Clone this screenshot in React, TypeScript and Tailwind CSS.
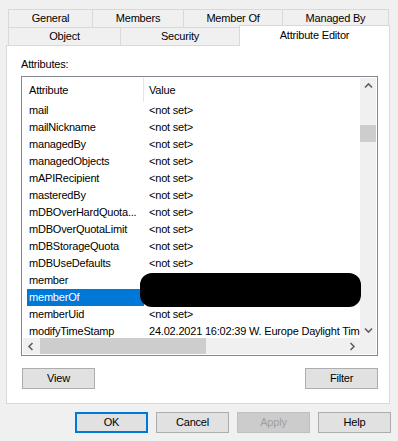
import React from "react";

const rows: [string, string][] = [
  ["mail", "<not set>"],
  ["mailNickname", "<not set>"],
  ["managedBy", "<not set>"],
  ["managedObjects", "<not set>"],
  ["mAPIRecipient", "<not set>"],
  ["masteredBy", "<not set>"],
  ["mDBOverHardQuota...", "<not set>"],
  ["mDBOverQuotaLimit", "<not set>"],
  ["mDBStorageQuota", "<not set>"],
  ["mDBUseDefaults", "<not set>"],
  ["member", ""],
  ["memberOf", ""],
  ["memberUid", "<not set>"],
  ["modifyTimeStamp", "24.02.2021 16:02:39 W. Europe Daylight Time"],
];

function Chevron({ dir }: { dir: "up" | "down" | "left" | "right" }) {
  const d =
    dir === "up"
      ? "M1 5.5 L4.5 2 L8 5.5"
      : dir === "down"
      ? "M1 2.5 L4.5 6 L8 2.5"
      : dir === "left"
      ? "M5.5 1 L2 4.5 L5.5 8"
      : "M2.5 1 L6 4.5 L2.5 8";
  return (
    <svg width="9" height="9" viewBox="0 0 9 9">
      <path d={d} stroke="#606060" strokeWidth="1.6" fill="none" />
    </svg>
  );
}

export default function App() {
  return (
    <div className="w-[398px] h-[441px] bg-[#f0f0f0] font-['Liberation_Sans',Arial,sans-serif] text-[11px] tracking-[-0.2px] text-black leading-[13px] overflow-hidden">
      {/* Tabs row 1 */}
      <div className="flex ml-[8px] pt-[9px] h-[27px]">
        <div className="w-[84px] h-[18px] border-t border-l border-[#d9d9d9] flex items-center justify-center">General</div>
        <div className="w-[91px] h-[18px] border-t border-l border-[#d9d9d9] flex items-center justify-center">Members</div>
        <div className="w-[99px] h-[18px] border-t border-l border-[#d9d9d9] flex items-center justify-center">Member Of</div>
        <div className="w-[107px] h-[18px] border-t border-l border-r border-[#d9d9d9] flex items-center justify-center">Managed By</div>
      </div>
      {/* Tabs row 2 */}
      <div className="flex items-start ml-[8px] h-[18px]">
        <div className="w-[112px] h-[18px] border-t border-l border-[#d9d9d9] flex items-center justify-center">Object</div>
        <div className="w-[119px] h-[18px] border-t border-l border-[#d9d9d9] flex items-center justify-center">Security</div>
        <div className="relative z-10 -mt-[2px] w-[151px] h-[21px] pb-[2px] bg-white border-t border-l border-r border-[#d9d9d9] flex items-center justify-center">
          Attribute Editor
        </div>
      </div>
      {/* Panel */}
      <div className="ml-[6px] w-[384px] h-[359px] bg-white border border-[#d9d9d9] flex flex-col">
        <div className="mt-[12px] ml-[14px] h-[13px]">Attributes:</div>
        <div className="relative mt-[5px] ml-[14px] w-[357px] h-[280px] border border-[#828790] p-px flex flex-col">
          <div className="flex h-[260px]">
            <div className="w-[337px] h-full overflow-hidden">
              <div className="flex h-[24px]">
                <div className="w-[121px] shrink-0 h-full flex items-center pl-[6px] border-r border-[#e5e5e5]">Attribute</div>
                <div className="h-full flex items-center pl-[5px]">Value</div>
              </div>
              {rows.map(([a, v]) => {
                const sel = a === "memberOf";
                return (
                  <div key={a} className="flex h-[17px] whitespace-nowrap">
                    {sel ? (
                      <div className="w-[121px] shrink-0 h-full pl-[4px]">
                        <div className="h-full bg-[#0078d7] text-white flex items-center pl-[2px]">{a}</div>
                      </div>
                    ) : (
                      <div className="w-[121px] shrink-0 h-full flex items-center pl-[6px]">{a}</div>
                    )}
                    <div className="h-full flex items-center pl-[5px]">{v}</div>
                  </div>
                );
              })}
            </div>
            <div className="relative w-[16px] h-full bg-[#f0f0f0] flex flex-col justify-between">
              <div className="h-[16px] flex items-center justify-center">
                <Chevron dir="up" />
              </div>
              <div className="absolute left-0 top-[47px] w-[16px] h-[17px] bg-[#cdcdcd]" />
              <div className="h-[16px] flex items-center justify-center">
                <Chevron dir="down" />
              </div>
            </div>
          </div>
          <div className="flex h-[16px]">
            <div className="w-[337px] h-full bg-[#f0f0f0] flex items-center">
              <div className="w-[16px] h-full flex items-center justify-center">
                <Chevron dir="left" />
              </div>
              <div className="ml-[1px] w-[166px] h-full bg-[#cdcdcd]" />
              <div className="flex-1" />
              <div className="w-[16px] h-full flex items-center justify-center">
                <Chevron dir="right" />
              </div>
            </div>
            <div className="w-[16px] h-full bg-[#f0f0f0]" />
          </div>
          <div className="absolute left-[118px] top-[196px] w-[221px] h-[34px] bg-black rounded-[12px]" />
        </div>
        <div className="mt-[12px] flex justify-between pl-[15px] pr-[11px]">
          <button className="w-[73px] h-[21px] bg-[#e1e1e1] border border-[#adadad] flex items-center justify-center">View</button>
          <button className="w-[73px] h-[21px] bg-[#e1e1e1] border border-[#adadad] flex items-center justify-center">Filter</button>
        </div>
      </div>
      {/* Bottom buttons */}
      <div className="mt-[8px] flex justify-end gap-[8px] pr-[7px]">
        <button className="w-[73px] h-[21px] bg-[#e1e1e1] border-2 border-[#0078d7] flex items-center justify-center">OK</button>
        <button className="w-[73px] h-[21px] bg-[#e1e1e1] border border-[#adadad] flex items-center justify-center">Cancel</button>
        <button className="w-[73px] h-[21px] bg-[#cccccc] border border-[#bfbfbf] text-[#a0a0a0] flex items-center justify-center">Apply</button>
        <button className="w-[73px] h-[21px] bg-[#e1e1e1] border border-[#adadad] flex items-center justify-center">Help</button>
      </div>
    </div>
  );
}
